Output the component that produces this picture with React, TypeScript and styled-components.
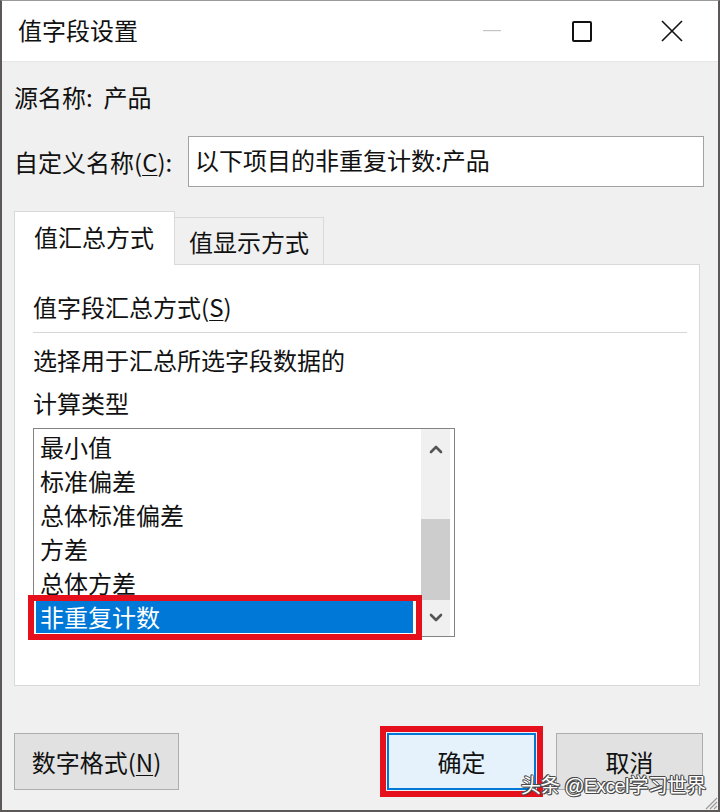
import React from "react";
import styled, { createGlobalStyle } from "styled-components";

const GlobalStyle = createGlobalStyle`
  html, body { margin: 0; padding: 0; background: #f0f0f0; }
  * { box-sizing: border-box; }
`;

const FONT = `"Noto Sans CJK SC", "Microsoft YaHei", "Liberation Sans", sans-serif`;

const Window = styled.div`
  position: relative;
  width: 720px;
  height: 812px;
  display: flex;
  flex-direction: column;
  background: #f0f0f0;
  border-left: 2px solid #5c5858;
  border-right: 2px solid #5c5858;
  border-bottom: 2px solid #5c5858;
  border-top: 1px solid #9a9a9a;
  font-family: ${FONT};
  font-size: 24px;
  color: #111;
  overflow: hidden;
`;

const TitleBar = styled.div`
  height: 61px;
  flex: none;
  background: #ffffff;
  display: flex;
  align-items: center;
  border-bottom: 1px solid #e6e6e6;
`;

const Title = styled.div`
  flex: 1;
  padding-left: 16px;
  line-height: 34px;
  margin-top: -2px;
`;

const Controls = styled.div`
  display: flex;
  height: 100%;
  padding-right: 1px;
`;

const CtrlButton = styled.div`
  width: 90px;
  height: 100%;
  display: flex;
  align-items: center;
  justify-content: center;
`;

const Body = styled.div`
  flex: 1;
  display: flex;
  flex-direction: column;
  padding: 0 12px;
`;

const SourceRow = styled.div`
  margin-top: 18px;
  line-height: 34px;
  height: 34px;
`;

const NameRow = styled.div`
  margin-top: 22px;
  height: 51px;
  display: flex;
  align-items: center;
  justify-content: space-between;
  padding-right: 2px;
`;

const Label = styled.span`
  line-height: 34px;
`;

const U = styled.span`
  text-decoration: underline;
  text-underline-offset: 3px;
  text-decoration-thickness: 1px;
`;

const TextInput = styled.div`
  width: 516px;
  height: 51px;
  background: #ffffff;
  border: 1px solid #a2a2a2;
  padding: 6px 0 0 6px;
  line-height: 34px;
`;

const TabBar = styled.div`
  margin-top: 24px;
  display: flex;
  align-items: flex-end;
  position: relative;
  z-index: 1;
  margin-bottom: -1px;
`;

const Tab = styled.div<{ $active?: boolean }>`
  height: ${(p) => (p.$active ? 54 : 48)}px;
  padding: 0 ${(p) => (p.$active ? 20 : 14)}px 0 ${(p) => (p.$active ? 19 : 14)}px;
  display: flex;
  align-items: center;
  background: ${(p) => (p.$active ? "#ffffff" : "#f0f0f0")};
  border: 1px solid #d9d9d9;
  border-bottom: ${(p) => (p.$active ? "none" : "1px solid #d9d9d9")};
  margin-left: ${(p) => (p.$active ? 0 : -1)}px;
  padding-bottom: ${(p) => (p.$active ? 4 : 0)}px;
`;

const Panel = styled.div`
  width: 686px;
  height: 422px;
  background: #ffffff;
  border: 1px solid #d9d9d9;
  padding: 25px 12px 0 18px;
  display: flex;
  flex-direction: column;
`;

const Heading = styled.div`
  line-height: 34px;
`;

const Separator = styled.div`
  margin-top: 8px;
  height: 1px;
  background: #d6d6d6;
`;

const Description = styled.div`
  margin-top: 5px;
  line-height: 43px;
`;

const ListBox = styled.div`
  margin-top: 4px;
  width: 422px;
  height: 209px;
  border: 1px solid #838383;
  display: flex;
  background: #ffffff;
  position: relative;
`;

const Items = styled.div`
  flex: 1;
  padding: 2px 8px 0 2px;
  display: flex;
  flex-direction: column;
`;

const Item = styled.div<{ $selected?: boolean }>`
  position: relative;
  height: ${(p) => (p.$selected ? 32 : 34)}px;
  line-height: 32px;
  padding-left: 4px;
  background: ${(p) => (p.$selected ? "#0078d7" : "transparent")};
  color: ${(p) => (p.$selected ? "#ffffff" : "#111")};
`;

const RedBox = styled.div<{ $t: number; $r: number; $b: number; $l: number }>`
  position: absolute;
  top: ${(p) => -p.$t}px;
  right: ${(p) => -p.$r}px;
  bottom: ${(p) => -p.$b}px;
  left: ${(p) => -p.$l}px;
  border: 6px solid #e5101c;
  pointer-events: none;
`;

const ScrollBar = styled.div`
  width: 29px;
  margin-right: 4px;
  background: #f0f0f0;
  display: flex;
  flex-direction: column;
`;

const Arrow = styled.div<{ $h: number }>`
  height: ${(p) => p.$h}px;
  display: flex;
  align-items: center;
  justify-content: center;
`;

const TrackGap = styled.div<{ $h: number }>`
  height: ${(p) => p.$h}px;
`;

const Thumb = styled.div`
  height: 81px;
  background: #cdcdcd;
`;

const Footer = styled.div`
  margin-top: 47px;
  display: flex;
  align-items: center;
  gap: 20px;
  padding-right: 3px;
`;

const FooterSpacer = styled.div`
  flex: 1;
`;

const Button = styled.div<{ $w: number; $default?: boolean }>`
  position: relative;
  width: ${(p) => p.$w}px;
  height: 57px;
  display: flex;
  align-items: center;
  justify-content: center;
  background: ${(p) => (p.$default ? "#e5f1fb" : "#e1e1e1")};
  border: ${(p) => (p.$default ? "2px solid #0078d7" : "1px solid #adadad")};
`;

const Watermark = styled.div`
  position: absolute;
  left: 519px;
  top: 772px;
  font-family: "Liberation Sans", "Noto Sans CJK SC", sans-serif;
  font-size: 20px;
  line-height: 26px;
  color: #ffffff;
  letter-spacing: -0.8px;
  text-shadow: 1px 0 0 #4a4a4a, -1px 0 0 #4a4a4a, 0 1px 0 #4a4a4a, 0 -1px 0 #4a4a4a,
    1px 1px 0 #4a4a4a, -1px -1px 0 #4a4a4a;
  white-space: nowrap;
`;

const Grip = styled.svg`
  position: absolute;
  right: 0;
  bottom: 0;
`;

const Chevron = ({ up }: { up?: boolean }) => (
  <svg width="14" height="10" viewBox="0 0 14 10">
    <path
      d={up ? "M2 8 L7 3 L12 8" : "M2 2 L7 7 L12 2"}
      fill="none"
      stroke="#555"
      strokeWidth="2.6"
      strokeLinecap="round"
      strokeLinejoin="round"
    />
  </svg>
);

const items = ["最小值", "标准偏差", "总体标准偏差", "方差", "总体方差", "非重复计数"];

export default function App() {
  return (
    <>
      <GlobalStyle />
      <Window>
        <TitleBar>
          <Title>值字段设置</Title>
          <Controls>
            <CtrlButton>
              <svg width="18" height="2" viewBox="0 0 18 2">
                <rect x="0" y="0" width="18" height="1.2" fill="#c4c4c4" />
              </svg>
            </CtrlButton>
            <CtrlButton>
              <svg width="20" height="21" viewBox="0 0 20 21">
                <rect x="1" y="1" width="18" height="19" rx="1" fill="none" stroke="#111" strokeWidth="2" />
              </svg>
            </CtrlButton>
            <CtrlButton>
              <svg width="22" height="22" viewBox="0 0 22 22">
                <path d="M1 1 L21 21 M21 1 L1 21" stroke="#111" strokeWidth="1.6" />
              </svg>
            </CtrlButton>
          </Controls>
        </TitleBar>
        <Body>
          <SourceRow>源名称:&nbsp; 产品</SourceRow>
          <NameRow>
            <Label>
              自定义名称(<U>C</U>):
            </Label>
            <TextInput>以下项目的非重复计数:产品</TextInput>
          </NameRow>
          <TabBar>
            <Tab $active>值汇总方式</Tab>
            <Tab>值显示方式</Tab>
          </TabBar>
          <Panel>
            <Heading>
              值字段汇总方式(<U>S</U>)
            </Heading>
            <Separator />
            <Description>
              选择用于汇总所选字段数据的
              <br />
              计算类型
            </Description>
            <ListBox>
              <Items>
                {items.map((it, i) => {
                  const sel = i === items.length - 1;
                  return (
                    <Item key={it} $selected={sel}>
                      {it}
                      {sel && <RedBox $t={6} $r={9} $b={7} $l={8} />}
                    </Item>
                  );
                })}
              </Items>
              <ScrollBar>
                <Arrow $h={40}>
                  <Chevron up />
                </Arrow>
                <TrackGap $h={50} />
                <Thumb />
                <Arrow $h={36}>
                  <Chevron />
                </Arrow>
              </ScrollBar>
            </ListBox>
          </Panel>
          <Footer>
            <Button $w={165}>
              数字格式(<U>N</U>)
            </Button>
            <FooterSpacer />
            <Button $w={149} $default>
              确定
              <RedBox $t={9} $r={9} $b={9} $l={9} />
            </Button>
            <Button $w={147}>取消</Button>
          </Footer>
        </Body>
        <Watermark>头条 @Excel学习世界</Watermark>
        <Grip width="16" height="16" viewBox="0 0 16 16">
          <path d="M15 4 L4 15 M15 8 L8 15 M15 12 L12 15" stroke="#9a9a9a" strokeWidth="1.2" />
        </Grip>
      </Window>
    </>
  );
}
